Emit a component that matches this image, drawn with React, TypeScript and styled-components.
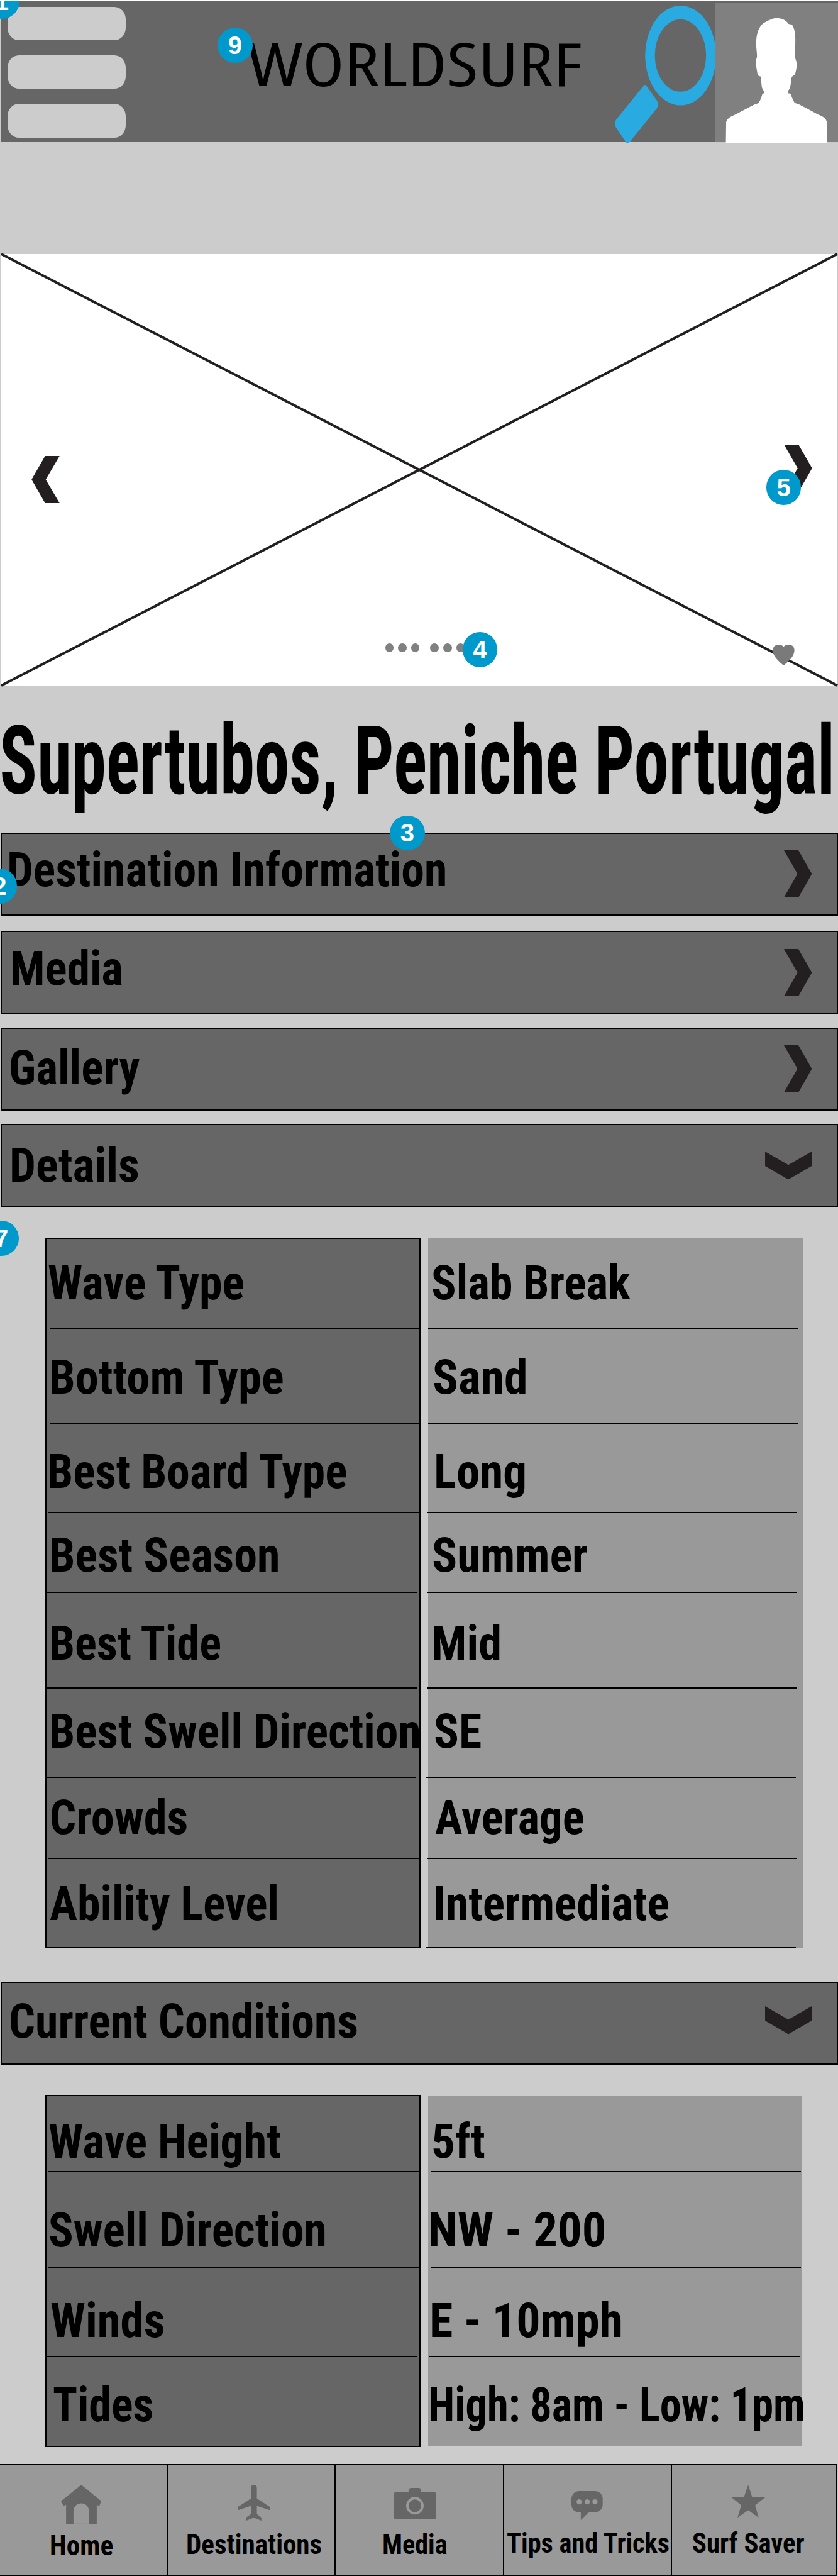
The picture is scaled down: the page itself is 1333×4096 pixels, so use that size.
import React, { useLayoutEffect, useState } from "react";
import styled, { createGlobalStyle } from "styled-components";

const GlobalStyle = createGlobalStyle`
  html, body { margin: 0; padding: 0; background: #cccccc; }
  *, *::before, *::after { box-sizing: border-box; }
`;

const ROBOTO = 'Roboto, "Liberation Sans", sans-serif';
const OPEN = '"Open Sans", "Noto Sans", sans-serif';

/* ---------- text squeezed to a fixed ink width ---------- */

const FitBox = styled.span<{ $w: number; $size: number; $x: number; $base: number; $weight: number; $family: string; $rise: number }>`
  display: block;
  flex: none;
  width: ${(p) => p.$w}px;
  height: ${(p) => p.$size}px;
  margin-left: ${(p) => p.$x}px;
  margin-top: ${(p) => p.$base - p.$size * p.$rise}px;
  font-family: ${(p) => p.$family};
  font-weight: ${(p) => p.$weight};
  font-stretch: condensed;
  font-size: ${(p) => p.$size}px;
  line-height: ${(p) => p.$size}px;
  color: #000;
  white-space: pre;
`;

const FitInk = styled.span`
  display: inline-block;
  transform-origin: 0 0;
`;

type FitProps = {
  children: string;
  w: number;
  x?: number;
  base: number;
  size?: number;
  weight?: number;
  family?: string;
  rise?: number;
};

function Fit({ children, w, x = 0, base, size = 75.5, weight = 700, family = ROBOTO, rise = 0.8418 }: FitProps) {
  const [fit, setFit] = useState({ scale: 1, shift: 0 });
  useLayoutEffect(() => {
    const ctx = document.createElement("canvas").getContext("2d");
    if (!ctx) return;
    ctx.font = `${weight} condensed ${size}px ${family}`;
    const m = ctx.measureText(children);
    const scale = w / (m.actualBoundingBoxLeft + m.actualBoundingBoxRight);
    setFit({ scale, shift: m.actualBoundingBoxLeft * scale });
  }, [children, w, size, weight, family]);
  return (
    <FitBox $w={w} $size={size} $x={x} $base={base} $weight={weight} $family={family} $rise={rise}>
      <FitInk style={{ transform: `translateX(${fit.shift}px) scaleX(${fit.scale})` }}>{children}</FitInk>
    </FitBox>
  );
}

/* ---------- page ---------- */

const Page = styled.div`
  position: relative;
  display: flex;
  flex-direction: column;
  width: 1333px;
  height: 4096px;
  overflow: hidden;
  background: #cccccc;
  border-top: 2px solid #fff;
`;

const Header = styled.header`
  display: flex;
  flex: none;
  height: 224px;
  margin-left: 2px;
  background: #666666;
`;

const Menu = styled.div`
  display: flex;
  flex-direction: column;
  gap: 23.5px;
  padding: 8.5px 0 0 10px;
  width: 391.5px;
`;

const MenuBar = styled.span`
  width: 188px;
  height: 53.7px;
  border-radius: 18px / 20px;
  background: #cccccc;
`;

const SearchIcon = styled.svg`
  flex: none;
  width: 161px;
  height: 220px;
  margin: 7px 0 0 54px;
  overflow: visible;
`;

const Avatar = styled.svg`
  flex: none;
  width: 195px;
  height: 222.5px;
  margin-top: 3px;
  margin-left: -1px;
  overflow: visible;
`;

const Hero = styled.section`
  position: relative;
  flex: none;
  height: 686px;
  margin: 178px 1px 0 2px;
  background: #fff;
`;

const Cross = styled.svg`
  display: block;
  width: 1330px;
  height: 686px;
  overflow: visible;
`;

const HeroMark = styled.svg<{ $x: number; $y: number }>`
  position: absolute;
  left: ${(p) => p.$x}px;
  top: ${(p) => p.$y}px;
`;

const Dots = styled.div`
  position: absolute;
  left: 610.7px;
  top: 619.3px;
  display: flex;
  gap: 7px;
`;

const Dot = styled.i<{ $wide?: boolean }>`
  width: 13.6px;
  height: 13.6px;
  border-radius: 50%;
  background: #808080;
  margin-right: ${(p) => (p.$wide ? 10 : 0)}px;
`;

const Title = styled.h1`
  display: flex;
  flex: none;
  height: 234px;
  margin: 0;
`;

const Bar = styled.div<{ $gap: number }>`
  display: flex;
  flex: none;
  justify-content: space-between;
  align-items: flex-start;
  width: 1333px;
  height: 132px;
  margin: ${(p) => p.$gap}px 0 0 1px;
  padding-right: 41px;
  background: #666666;
  border: 2px solid #000;
`;

const Arrow = styled.svg<{ $top: number }>`
  flex: none;
  margin-top: ${(p) => p.$top}px;
`;

const Table = styled.div<{ $gap: number; $h: number }>`
  display: flex;
  flex: none;
  height: ${(p) => p.$h}px;
  margin: ${(p) => p.$gap}px 0 0 72px;
`;

const Names = styled.div`
  width: 597px;
  height: 100%;
  background: #666666;
  border: 2px solid #000;
`;

const Values = styled.div<{ $w: number }>`
  width: ${(p) => p.$w}px;
  margin: 1px 0 1.5px 12px;
  padding-top: 1px;
  background: #999999;
`;

const Cell = styled.div<{ $h: number }>`
  display: flex;
  flex-direction: column;
  justify-content: space-between;
  height: ${(p) => p.$h}px;
`;

const Rule = styled.span<{ $x: number }>`
  flex: none;
  width: 589px;
  height: 2px;
  margin-left: ${(p) => p.$x}px;
  background: #000;
`;

const Nav = styled.nav`
  display: flex;
  flex: none;
  height: 178px;
  width: 1332px;
  margin-top: 27px;
  background: #999999;
  border-top: 2px solid #000;
  border-bottom: 1px solid #000;
`;

const NavItem = styled.div<{ $w: number }>`
  display: flex;
  flex: none;
  flex-direction: column;
  width: ${(p) => p.$w}px;
  border-right: 2px solid #000;
`;

const IconSlot = styled.div<{ $x: number; $y: number }>`
  flex: none;
  height: 100px;
  padding: ${(p) => p.$y}px 0 0 ${(p) => p.$x}px;
`;

const Badge = styled.span<{ $x: number; $y: number }>`
  position: absolute;
  left: ${(p) => p.$x - 27.8}px;
  top: ${(p) => p.$y - 29.8}px;
  display: flex;
  align-items: center;
  justify-content: center;
  width: 55.6px;
  height: 55.6px;
  border-radius: 50%;
  background: #0099cc;
  color: #fff;
  font: 700 40px/1 "Liberation Sans", Arial, sans-serif;
`;

/* ---------- data ---------- */

type Row = { h: number; base: number; name: [string, number, number]; value: [string, number, number]; rules: [number | null, number | null] };

const details: Row[] = [
  { h: 143, base: 96.2, name: ["Wave Type", 3.3, 311.9], value: ["Slab Break", 6.8, 315.3], rules: [5, 0] },
  { h: 152, base: 103.1, name: ["Bottom Type", 8.4, 369.6], value: ["Sand", 9.4, 146.1], rules: [5, 0] },
  { h: 141, base: 101.4, name: ["Best Board Type", 5, 473.4], value: ["Long", 12.8, 141.1], rules: [2.5, -2.5] },
  { h: 127, base: 93.5, name: ["Best Season", 7.6, 360.3], value: ["Summer", 7.7, 244.8], rules: [1, -2.5] },
  { h: 152, base: 106.5, name: ["Best Tide", 7.6, 270.2], value: ["Mid", 8.5, 104.6], rules: [1, -2.5] },
  { h: 142, base: 94.8, name: ["Best Swell Direction", 7.6, 584.6], value: ["SE", 11.1, 73.1], rules: [-1, -4] },
  { h: 129, base: 89.1, name: ["Crowds", 7.6, 215], value: ["Average", 11.1, 235.4], rules: [2.5, -2.5] },
  { h: 142, base: 97.7, name: ["Ability Level", 5, 361.2], value: ["Intermediate", 11.9, 369.7], rules: [null, -4] },
];

const conditions: Row[] = [
  { h: 121, base: 98.8, name: ["Wave Height", 4.2, 367.9], value: ["5ft", 7.7, 81.6], rules: [2.5, 3.5] },
  { h: 152, base: 118.1, name: ["Swell Direction", 5, 437.7], value: ["NW - 200", 4.3, 276.2], rules: [2.5, 3.5] },
  { h: 142, base: 110.3, name: ["Winds", 6.7, 179.3], value: ["E - 10mph", 6, 300.8], rules: [1, 2] },
  { h: 141, base: 102.8, name: ["Tides", 11, 157.2], value: ["High: 8am - Low: 1pm", 3.5, 593.1], rules: [null, null] },
];

function Sheet({ rows, gap, h, w }: { rows: Row[]; gap: number; h: number; w: number }) {
  return (
    <Table $gap={gap} $h={h}>
      <Names>
        {rows.map((r) => (
          <Cell key={r.name[0]} $h={r.h}>
            <Fit x={r.name[1]} w={r.name[2]} base={r.base}>{r.name[0]}</Fit>
            {r.rules[0] !== null && <Rule $x={r.rules[0]} />}
          </Cell>
        ))}
      </Names>
      <Values $w={w}>
        {rows.map((r) => (
          <Cell key={r.value[0]} $h={r.h}>
            <Fit x={r.value[1]} w={r.value[2]} base={r.base}>{r.value[0]}</Fit>
            {r.rules[1] !== null && <Rule $x={r.rules[1]} />}
          </Cell>
        ))}
      </Values>
    </Table>
  );
}

function Section({ gap, label, x, w, base, open, top }: { gap: number; label: string; x: number; w: number; base: number; open?: boolean; top: number }) {
  return (
    <Bar $gap={gap}>
      <Fit x={x} w={w} base={base}>{label}</Fit>
      {open ? (
        <Arrow $top={top} width="74" height="44.5" viewBox="0 0 74 44.5">
          <path d="M0 0L37 21.3L74 0V23L37 44.5L0 23Z" fill="#231f20" />
        </Arrow>
      ) : (
        <Arrow $top={top} width="44.5" height="75" viewBox="0 0 44.5 75">
          <path d="M0 0H23L44.5 37.5L23 75H0L21.5 37.5Z" fill="#231f20" />
        </Arrow>
      )}
    </Bar>
  );
}

const NAV_FILL = "#666666";

export default function App() {
  return (
    <Page>
      <GlobalStyle />
      <Header>
        <Menu>
          <MenuBar />
          <MenuBar />
          <MenuBar />
        </Menu>
        <Fit w={530} base={136} size={94.3} weight={500} family={OPEN} rise={0.888}>WORLDSURF</Fit>
        <SearchIcon viewBox="735 44 377 1050" preserveAspectRatio="none">
          <path
            fill="#29abe2"
            fillRule="evenodd"
            d="M848 422.5a132 378.5 0 1 0 264 0a132 378.5 0 1 0 -264 0ZM884 422.5a95.5 274.5 0 1 1 191 0a95.5 274.5 0 1 1 -191 0Z"
          />
          <path
            fill="#29abe2"
            d="M853 652L892 765Q899 792 892 822L789 1082Q783 1096 777 1082L739 968Q732 940 739 912L842 652Q848 638 853 652Z"
          />
        </SearchIcon>
        <Avatar viewBox="1111 24 457 1068" preserveAspectRatio="none">
          <rect x="1111" y="24" width="457" height="1061" fill="#808080" />
          <path
            fill="#fff"
            d="M1341 138C1325 138 1315 150 1291 175C1272 205 1263 260 1263 330C1263 370 1266 400 1266 430C1265 450 1262 455 1262 468C1262 500 1266 540 1268 565C1270 580 1274 580 1281 584C1281 610 1283 640 1284 665C1288 690 1293 695 1294 711C1288 712 1288 714 1286 718C1283 740 1278 770 1272 786C1260 797 1255 798 1247 808L1186 873C1160 895 1152 915 1151 935L1150 1092H1527V940C1526 915 1518 895 1500 880C1480 860 1450 825 1424 798C1412 790 1408 788 1405 780C1399 760 1395 735 1391 716C1388 713 1385 713 1381 712C1380 695 1386 685 1389 668C1394 640 1391 600 1397 584C1402 577 1405 575 1408 565C1412 540 1414 515 1414 490C1414 465 1407 445 1407 425C1408 380 1409 340 1409 300C1409 240 1403 205 1396 188C1390 183 1386 186 1383 181C1375 155 1358 138 1341 138Z"
          />
        </Avatar>
      </Header>

      <Hero>
        <Cross viewBox="0 0 1330 686">
          <path d="M0 0L1330 686M1330 0L0 686" stroke="#231f20" strokeWidth="4" />
        </Cross>
        <HeroMark $x={48.2} $y={321} width="45" height="75" viewBox="0 0 44.5 75">
          <path d="M44.5 0H21.5L0 37.5L21.5 75H44.5L22.5 37.5Z" fill="#231f20" />
        </HeroMark>
        <HeroMark $x={1244.5} $y={303} width="45" height="75" viewBox="0 0 44.5 75">
          <path d="M0 0H23L44.5 37.5L23 75H0L21.5 37.5Z" fill="#231f20" />
        </HeroMark>
        <Dots>
          <Dot />
          <Dot />
          <Dot $wide />
          <Dot />
          <Dot />
          <Dot />
        </Dots>
        <HeroMark $x={1227} $y={621} width="35" height="33" viewBox="0 0 35 33">
          <path
            d="M17.500 33C12.500 29 6 23.500 3 18C-1.500 10 -0.500 0.500 9 0.300C13 0.300 16 1.500 17.500 3.500C19 1.500 22 0.300 26 0.300C35.500 0.500 36.500 10 32 18C29 23.500 22.500 29 17.500 33Z"
            fill="#7a7a7a"
          />
        </HeroMark>
      </Hero>

      <Title>
        <Fit x={2.5} w={1319} base={171.8} size={152}>Supertubos, Peniche Portugal</Fit>
      </Title>

      <Section gap={0} label="Destination Information" x={12.3} w={693.4} base={83.4} top={26} />
      <Section gap={24} label="Media" x={16.5} w={174.3} base={84.7} top={26.7} />
      <Section gap={22} label="Gallery" x={14} w={204.8} base={88.4} top={26.2} />
      <Section gap={21} label="Details" x={15.7} w={200.5} base={90.2} top={41.7} open />
      <Sheet rows={details} gap={49} h={1130} w={595.5} />
      <Section gap={53} label="Current Conditions" x={14} w={550.7} base={87.1} top={37} open />
      <Sheet rows={conditions} gap={48} h={560} w={594.5} />

      <Nav>
        <NavItem $w={267.4}>
          <IconSlot $x={96.9} $y={30.6}>
            <svg width="64.1" height="62.5" viewBox="96.9 3950.6 64.1 62.5">
              <path
                fill={NAV_FILL}
                d="M129.2 3950.600L161 3976.500L157.600 3984.800L153.800 3982V4013.100H141.500V3993C141.500 3985 136 3980 129.200 3980S116.800 3985 116.800 3993V4013.100H105V3982L101.100 3984.800L96.900 3976.500Z"
              />
              <path d="M116.800 4012.800H141.500" stroke="#808080" strokeWidth="0.5" />
            </svg>
          </IconSlot>
          <Fit x={81.2} w={98.1} base={43.1} size={44}>Home</Fit>
        </NavItem>
        <NavItem $w={267}>
          <IconSlot $x={110.8} $y={30.6}>
            <svg width="51.8" height="57.1" viewBox="378.2 3950.6 51.8 57.1">
              <path
                fill={NAV_FILL}
                d="M399.400 3955.500C399.400 3952.500 401.500 3950.600 404.100 3950.600S408.800 3952.500 408.800 3955.500V3972.300L430 3986.200V3991L408.800 3984.200V3997.100L416 4002.700V4007.700L403.900 4002.900L391.800 4007.700V4002.700L399.400 3997.100V3984.200L378.200 3991V3986.200L399.400 3972.300Z"
              />
            </svg>
          </IconSlot>
          <Fit x={30.5} w={213.3} base={41.7} size={43.6}>Destinations</Fit>
        </NavItem>
        <NavItem $w={267.400}>
          <IconSlot $x={92.3} $y={36.2}>
            <svg width="66.1" height="50" viewBox="626.7 3956.2 66.1 50">
              <path
                fill={NAV_FILL}
                d="M628.700 3962.900H649.300L650 3959Q650.500 3956.200 654 3956.200H665.500Q669 3956.200 669.300 3959L670 3962.900H690.800Q692.800 3962.900 692.800 3964.900V4004.200Q692.800 4006.200 690.800 4006.200H628.700Q626.700 4006.200 626.700 4004.200V3964.900Q626.700 3962.900 628.700 3962.900Z"
              />
              <circle cx="659.7" cy="3984.5" r="12" fill="none" stroke="#999999" strokeWidth="3.9" />
            </svg>
          </IconSlot>
          <Fit x={75.3} w={101} base={41.7} size={43.6}>Media</Fit>
        </NavItem>
        <NavItem $w={267.2}>
          <IconSlot $x={107.300} $y={41.2}>
            <svg width="49.7" height="46.1" viewBox="909.1 3961.2 49.7 46.1">
              <rect x="909.1" y="3961.2" width="49.7" height="33.8" rx="12.3" fill={NAV_FILL} />
              <path d="M924 3994V4007.300L937.600 3994Z" fill={NAV_FILL} />
              <g fill="#999999">
                <circle cx="921.4" cy="3978.3" r="4.2" />
                <circle cx="934.2" cy="3978.3" r="4.2" />
                <circle cx="946.5" cy="3978.3" r="4.2" />
              </g>
            </svg>
          </IconSlot>
          <Fit x={5.3} w={258.400} base={39.4} size={43.6}>Tips and Tricks</Fit>
        </NavItem>
        <NavItem $w={262.600}>
          <IconSlot $x={93.8} $y={31}>
            <svg width="54.4" height="52.1" viewBox="1162.8 3951 54.4 52.1">
              <path
                fill={NAV_FILL}
                d="M1190 3951L1196.300 3970.600H1217.200L1201 3983.500L1206.500 4003.100L1190 3991.500L1173 4003.100L1178.900 3983.500L1162.800 3970.600H1183.200Z"
              />
            </svg>
          </IconSlot>
          <Fit x={32.6} w={177.2} base={39.4} size={43.6}>Surf Saver</Fit>
        </NavItem>
      </Nav>

      <Badge $x={2.8} $y={2}>1</Badge>
      <Badge $x={374} $y={72}>9</Badge>
      <Badge $x={1246.6} $y={775}>5</Badge>
      <Badge $x={763.5} $y={1033}>4</Badge>
      <Badge $x={648} $y={1324.5}>3</Badge>
      <Badge $x={-0.6} $y={1409}>2</Badge>
      <Badge $x={2} $y={1969}>7</Badge>
    </Page>
  );
}
